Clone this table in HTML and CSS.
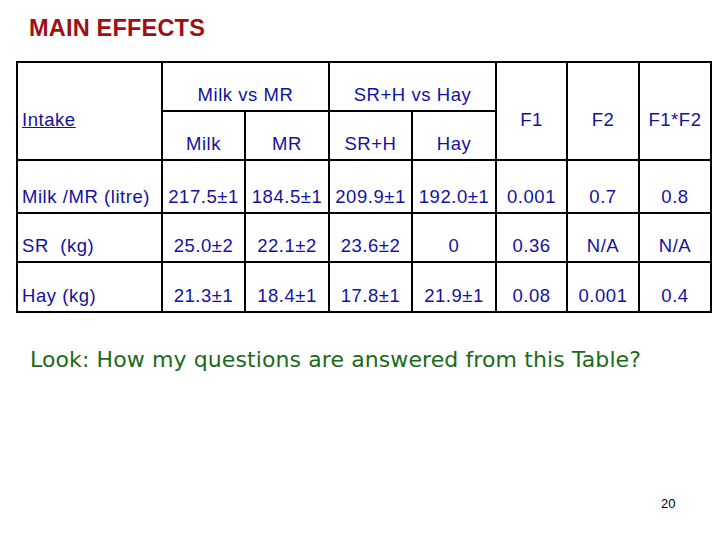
FILE: index.html
```html
<!DOCTYPE html>
<html>
<head>
<meta charset="utf-8">
<link rel="stylesheet" href="styles.css">
</head>
<body>
<div class="slide">
  <h1 class="title">MAIN EFFECTS</h1>
  <table class="effects">
    <colgroup>
      <col class="c-label">
      <col class="c-a"><col class="c-b"><col class="c-a"><col class="c-b">
      <col class="c-f"><col class="c-g"><col class="c-g">
    </colgroup>
    <tr class="r-h1">
      <td rowspan="2" class="label mid"><span class="u">Intake</span></td>
      <td colspan="2">Milk vs MR</td>
      <td colspan="2">SR+H vs Hay</td>
      <td rowspan="2" class="mid">F1</td>
      <td rowspan="2" class="mid">F2</td>
      <td rowspan="2" class="mid">F1*F2</td>
    </tr>
    <tr class="r-h2">
      <td>Milk</td><td>MR</td><td>SR+H</td><td>Hay</td>
    </tr>
    <tr class="r-d1">
      <td class="label">Milk /MR (litre)</td>
      <td>217.5±1</td><td>184.5±1</td><td>209.9±1</td><td>192.0±1</td>
      <td>0.001</td><td>0.7</td><td>0.8</td>
    </tr>
    <tr class="r-d2">
      <td class="label">SR&nbsp; (kg)</td>
      <td>25.0±2</td><td>22.1±2</td><td>23.6±2</td><td>0</td>
      <td>0.36</td><td>N/A</td><td>N/A</td>
    </tr>
    <tr class="r-d3">
      <td class="label">Hay (kg)</td>
      <td>21.3±1</td><td>18.4±1</td><td>17.8±1</td><td>21.9±1</td>
      <td>0.08</td><td>0.001</td><td>0.4</td>
    </tr>
  </table>
  <p class="note">Look: How my questions are answered from this Table?</p>
  <div class="page-num">20</div>
</div>
</body>
</html>
```
FILE: styles.css
```css
html, body {
  margin: 0;
  padding: 0;
  background: #ffffff;
}
.slide {
  width: 720px;
  height: 540px;
  position: relative;
  font-family: "Liberation Sans", Arial, sans-serif;
}
.title {
  margin: 0;
  padding: 15px 0 0 29px;
  font-size: 23.5px;
  line-height: 27px;
  font-weight: bold;
  letter-spacing: 0.2px;
  color: #a00e14;
}
.effects {
  margin: 19px 0 0 16px;
  border-collapse: separate;
  border-spacing: 0;
  table-layout: fixed;
  width: 696px;
  border-top: 2px solid #000;
  border-left: 2px solid #000;
  color: #1212a0;
  font-size: 18.5px;
  line-height: 20px;
  letter-spacing: 0.55px;
}
.c-label { width: 145px; }
.c-a { width: 83px; }
.c-b { width: 84px; }
.c-f { width: 71px; }
.c-g { width: 72px; }
.effects td {
  box-sizing: border-box;
  border-right: 2px solid #000;
  border-bottom: 2px solid #000;
  padding: 0 0 5px 0;
  text-align: center;
  vertical-align: bottom;
  white-space: nowrap;
}
.effects td.label {
  text-align: left;
  padding-left: 4px;
}
.effects td.mid {
  vertical-align: middle;
  padding-top: 17px;
  padding-bottom: 0;
}
.u { text-decoration: underline; }
.r-h1 td { height: 49px; }
.r-h2 td { height: 49px; }
.r-d1 td { height: 53px; }
.r-d2 td { height: 49px; }
.r-d3 td { height: 50px; }
.effects td.mid { height: 98px; }
.note {
  margin: 34px 0 0 30px;
  font-family: "DejaVu Sans", sans-serif;
  font-size: 22px;
  line-height: 26px;
  color: #1a6a1a;
  letter-spacing: 0.1px;
}
.page-num {
  position: absolute;
  left: 661px;
  top: 496px;
  font-size: 13px;
  line-height: 16px;
  color: #000;
}
```
